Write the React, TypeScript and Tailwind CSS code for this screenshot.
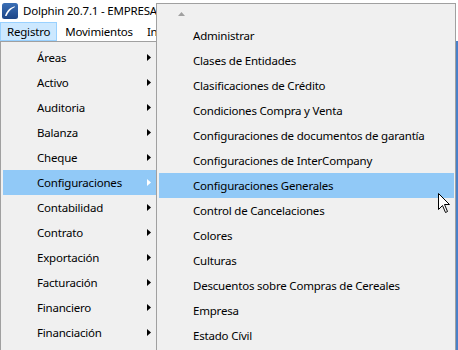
import React from "react";

const mainItems = [
  "Áreas",
  "Activo",
  "Auditoria",
  "Balanza",
  "Cheque",
  "Configuraciones",
  "Contabilidad",
  "Contrato",
  "Exportación",
  "Facturación",
  "Financiero",
  "Financiación",
];

const subItems = [
  "Administrar",
  "Clases de Entidades",
  "Clasificaciones de Crédito",
  "Condiciones Compra y Venta",
  "Configuraciones de documentos de garantía",
  "Configuraciones de InterCompany",
  "Configuraciones Generales",
  "Control de Cancelaciones",
  "Colores",
  "Culturas",
  "Descuentos sobre Compras de Cereales",
  "Empresa",
  "Estado Cívil",
];

function Arrow({ color }: { color: string }) {
  return (
    <svg width="4" height="7" viewBox="0 0 4 7" className="shrink-0">
      <path d="M0 0 L4 3.5 L0 7 Z" fill={color} />
    </svg>
  );
}

export default function App() {
  return (
    <div
      className="relative w-[458px] h-[350px] overflow-hidden bg-white text-black text-[11.5px] tracking-[-0.2px]"
      style={{ fontFamily: '"Noto Sans", "Open Sans", sans-serif' }}
    >
      <div className="w-[156px] overflow-hidden">
        {/* title bar */}
        <div className="h-[22px] flex items-center pl-[2px] gap-[5px]">
          <svg width="16" height="16" viewBox="0 0 16 16" className="shrink-0">
            <defs>
              <linearGradient id="g" x1="0" y1="0" x2="0" y2="1">
                <stop offset="0" stopColor="#3b6fb6" />
                <stop offset="1" stopColor="#1d4586" />
              </linearGradient>
            </defs>
            <rect x="0" y="0" width="16" height="16" rx="2.5" fill="url(#g)" />
            <path
              d="M3 13 C4 9 7 5 12 3.5 C13 3.2 13.5 3.5 12.5 4.2 C9 6 6 9 4.5 13 Z"
              fill="#fff"
            />
          </svg>
          <span className="whitespace-nowrap">Dolphin 20.7.1 - EMPRESA</span>
        </div>
        {/* menu bar */}
        <div className="h-[19px] flex items-stretch whitespace-nowrap">
          <div className="px-[6px] bg-[#cce8ff] border border-[#99d1ff] flex items-center">Registro</div>
          <div className="px-[8px] flex items-center">Movimientos</div>
          <div className="px-[6px] flex items-center">Informes</div>
        </div>
      </div>

      {/* main dropdown */}
      <div className="absolute left-0 top-[41px] w-[157px] h-[320px] bg-[#f0f0f0] border border-[#a0a0a0] pt-[3px] pl-[2px]">
        {mainItems.map((t) => {
          const active = t === "Configuraciones";
          return (
            <div
              key={t}
              className={`h-[25px] flex items-center pl-[34px] pr-[5px] ${active ? "bg-[#91c9f7]" : ""}`}
            >
              <span className="flex-1 whitespace-nowrap">{t}</span>
              <Arrow color={active ? "#fff" : "#000"} />
            </div>
          );
        })}
      </div>

      {/* submenu */}
      <div className="absolute left-[156px] top-[3px] w-[300px] h-[360px] bg-[#f0f0f0] border border-[#a0a0a0] pl-[2px] pr-[1px]">
        <div className="h-[19px] flex items-center pl-[19px]">
          <svg width="7" height="4" viewBox="0 0 7 4">
            <path d="M0 4 L3.5 0 L7 4 Z" fill="#a0a0a0" />
          </svg>
        </div>
        {subItems.map((t) => {
          const active = t === "Configuraciones Generales";
          return (
            <div
              key={t}
              className={`h-[25px] flex items-center pl-[34px] whitespace-nowrap ${active ? "bg-[#91c9f7]" : ""}`}
            >
              {t}
            </div>
          );
        })}
      </div>

      {/* window edge behind */}
      <div className="absolute left-[456px] top-[41px] w-[2px] h-[309px] bg-[#4a80c8]" />

      {/* cursor */}
      <svg
        className="absolute left-[438px] top-[193px]"
        width="13"
        height="21"
        viewBox="0 0 13 21"
      >
        <path
          d="M0.5 0.5 L0.5 16.5 L4.5 12.5 L7.5 19.5 L9.5 18.5 L6.5 11.5 L11.5 11.5 Z"
          fill="#fff"
          stroke="#000"
          strokeWidth="1"
          strokeLinejoin="miter"
        />
      </svg>
    </div>
  );
}
